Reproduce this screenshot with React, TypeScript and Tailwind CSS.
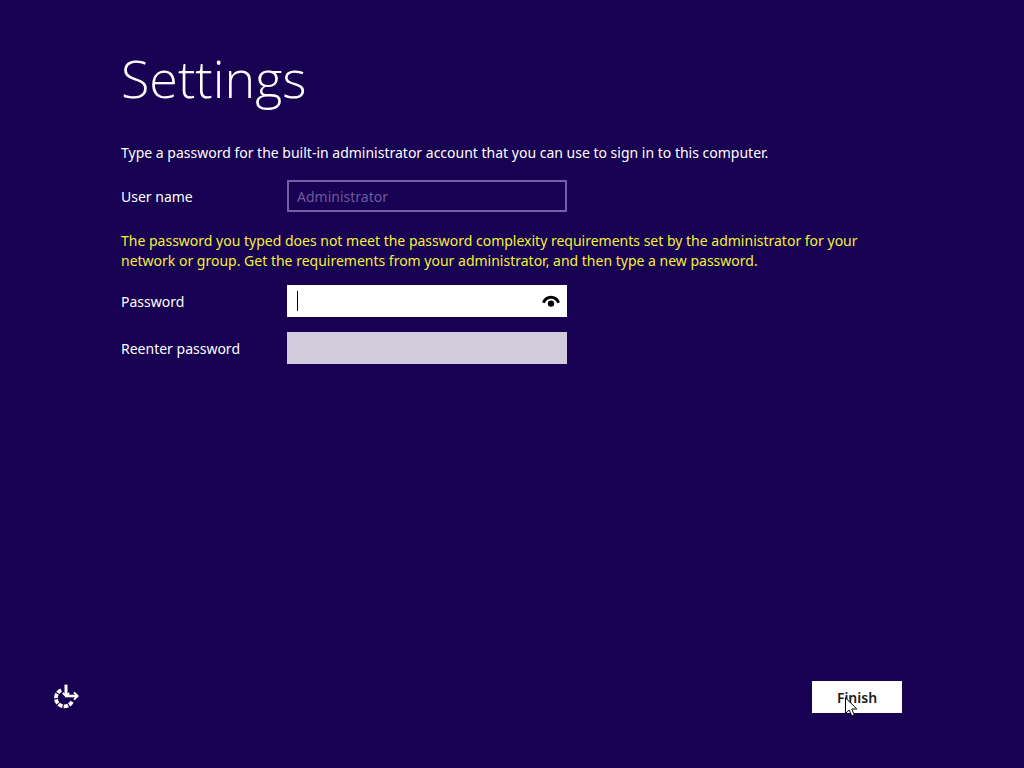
import React from 'react';

const EaseOfAccessIcon: React.FC = () => (
    <svg width="26" height="26" viewBox="0 0 26 26" fill="none" stroke="white" aria-hidden="true">
        <path d="M8.2 6.2 A8.4 8.4 0 1 0 18.9 17.6" strokeWidth="3.8" strokeDasharray="4.4 1.2" />
        <path d="M13 0.6 V11" strokeWidth="3" />
        <path d="M9.8 9 L13 12.2 L16.2 9" strokeWidth="1.8" />
        <path d="M12 12 H23" strokeWidth="2.6" />
        <path d="M21 8.4 L24.6 12 L21 15.6" strokeWidth="2" />
    </svg>
);

const RevealIcon: React.FC = () => (
    <svg width="18" height="12" viewBox="0 0 18 12" aria-hidden="true">
        <path d="M1.3 7.8 C4.5 0.4 13.5 0.4 16.7 7.8" fill="none" stroke="black" strokeWidth="2.8" />
        <circle cx="9" cy="8.6" r="3.2" fill="black" />
    </svg>
);

const PointerIcon: React.FC = () => (
    <svg width="13" height="20" viewBox="0 0 13 20" aria-hidden="true">
        <path d="M0.5 0.8 V16.5 L4.2 13 L6.8 19 L9.3 18 L6.8 12 H11.8 Z" fill="white" stroke="black" strokeWidth="1" />
    </svg>
);

const App: React.FC = () => {
    return (
        <main className="flex min-h-screen flex-col bg-[#180052] pt-11 pr-[122px] pb-[55px] pl-[121px] font-['Noto_Sans','Open_Sans',sans-serif] text-sm text-white">
            <h1 className="font-['Open_Sans','Noto_Sans',sans-serif] text-[52px] leading-[68px] font-[330]">Settings</h1>

            <form id="settings" className="mt-[31px]" onSubmit={(e) => e.preventDefault()}>
                <p className="leading-5">
                    Type a password for the built-in administrator account that you can use to sign in to this computer.
                </p>

                <div className="mt-[17px] flex items-center">
                    <label htmlFor="username" className="w-[166px] pt-0.5">User name</label>
                    <input
                        id="username"
                        type="text"
                        defaultValue="Administrator"
                        disabled
                        className="h-8 w-[280px] border-2 border-[#7460a5] bg-transparent px-2 text-[#6f5a9f]"
                    />
                </div>

                <p role="alert" className="mt-[19px] leading-5 text-[#f2f23a]">
                    The password you typed does not meet the password complexity requirements set by the administrator for your network or group. Get the requirements from your administrator, and then type a new password.
                </p>

                <div className="mt-3.5 flex items-center">
                    <label htmlFor="password" className="w-[166px] pt-0.5">Password</label>
                    <div className="relative">
                        <input id="password" type="password" className="block h-8 w-[280px] bg-white px-2 text-black outline-none" />
                        <span className="absolute top-1.5 left-2.5 h-5 w-px bg-black" />
                        <button type="button" aria-label="Show password" className="absolute top-0 right-0 flex h-8 w-8 items-center justify-center">
                            <RevealIcon />
                        </button>
                    </div>
                </div>

                <div className="mt-[15px] flex items-center">
                    <label htmlFor="reenter" className="w-[166px] pt-0.5">Reenter password</label>
                    <input id="reenter" type="password" className="h-8 w-[280px] bg-[#d1ccdc] px-2 text-black outline-none" />
                </div>
            </form>

            <footer className="mt-auto -ml-[68px] flex items-center justify-between">
                <button type="button" aria-label="Ease of access">
                    <EaseOfAccessIcon />
                </button>
                <button type="submit" form="settings" className="relative h-8 w-[90px] bg-white pt-0.5 font-semibold text-[#1a1a1a]">
                    Finish
                    <span className="pointer-events-none absolute top-4 left-[33px]">
                        <PointerIcon />
                    </span>
                </button>
            </footer>
        </main>
    );
};

export default App;
